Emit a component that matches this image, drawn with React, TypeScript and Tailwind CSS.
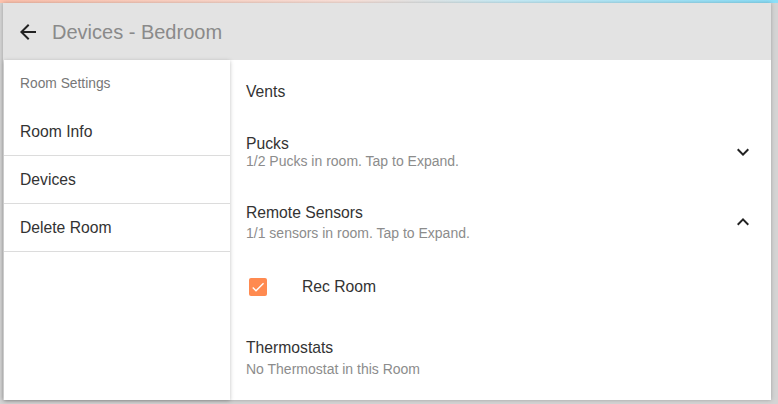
import React from "react";

function BackArrow() {
  return (
    <svg width="24" height="24" viewBox="0 0 24 24" className="shrink-0">
      <path d="M20 11H7.83l5.59-5.59L12 4l-8 8 8 8 1.41-1.41L7.83 13H20v-2z" fill="#222" />
    </svg>
  );
}

function Chevron({ up }: { up?: boolean }) {
  return (
    <svg width="24" height="24" viewBox="0 0 24 24" className="shrink-0">
      {up ? (
        <path d="M12 8l-6 6 1.41 1.41L12 10.83l4.59 4.58L18 14z" fill="#222" />
      ) : (
        <path d="M16.59 8.59L12 13.17 7.41 8.59 6 10l6 6 6-6z" fill="#222" />
      )}
    </svg>
  );
}

function SideNav() {
  const items = ["Room Info", "Devices", "Delete Room"];
  return (
    <div className="w-[226px] ml-[1px] shrink-0 bg-white flex flex-col shadow-[0_1px_4px_rgba(0,0,0,0.25)] relative z-10">
      <div className="h-[48px] pt-[1px] flex items-center px-4 text-[13.8px] text-[#777]">Room Settings</div>
      {items.map((item) => (
        <div key={item} className="h-[48px] flex items-center px-4 text-[15.7px] text-[#333] border-b border-[#dcdcdc]">
          {item}
        </div>
      ))}
    </div>
  );
}

function Section({ title, sub, gap, open }: { title: string; sub: string; gap: string; open?: boolean }) {
  return (
    <div className="flex items-center h-full pr-[16px]">
      <div className="flex-1 flex flex-col">
        <div className="text-[15.7px] leading-[18px] text-[#333]">{title}</div>
        <div className={`text-[14px] leading-[16px] text-[#8c8c8c] ${gap}`}>{sub}</div>
      </div>
      {open !== undefined && <Chevron up={open} />}
    </div>
  );
}

function DevicePanel() {
  return (
    <div className="flex-1 bg-white flex flex-col pl-4">
      <div className="h-[62px] pt-[1px] flex items-center text-[15.7px] text-[#333]">Vents</div>
      <div className="h-[60px]">
        <Section title="Pucks" sub="1/2 Pucks in room. Tap to Expand." gap="mt-0" open={false} />
      </div>
      <div className="h-[80px]">
        <Section title="Remote Sensors" sub="1/1 sensors in room. Tap to Expand." gap="mt-[3px]" open={true} />
      </div>
      <div className="h-[50px] flex items-center">
        <div className="ml-[3px] w-[18px] h-[18px] rounded-[2px] bg-[#ff8a50] flex items-center justify-center">
          <svg width="16" height="16" viewBox="0 0 24 24">
            <path d="M9 16.17L4.83 12l-1.42 1.41L9 19 21 7l-1.41-1.41z" fill="#fff" />
          </svg>
        </div>
        <div className="ml-[35px] text-[15.7px] text-[#333]">Rec Room</div>
      </div>
      <div className="h-[88px] pt-[3px]">
        <Section title="Thermostats" sub="No Thermostat in this Room" gap="mt-[4px]" />
      </div>
    </div>
  );
}

export default function App() {
  return (
    <div className="w-[778px] h-[404px] overflow-hidden bg-[#d4d4d4] flex flex-col font-['Liberation_Sans',Arial,sans-serif]">
      <div className="h-[3px] shrink-0 bg-[linear-gradient(90deg,#ffc3ae_0%,#fde4dc_45%,#c9eef9_65%,#8adff9_100%)]" />
      <div className="ml-[3px] w-[768px] h-[397px] bg-[#e3e3e3] flex flex-col shadow-[0_0_4px_rgba(0,0,0,0.25)]">
        <div className="h-[57px] shrink-0 flex items-center pl-[13px] gap-[12px]">
          <BackArrow />
          <div className="text-[20px] text-[#8a8a8a]">Devices - Bedroom</div>
        </div>
        <div className="flex flex-1">
          <SideNav />
          <DevicePanel />
        </div>
      </div>
    </div>
  );
}
